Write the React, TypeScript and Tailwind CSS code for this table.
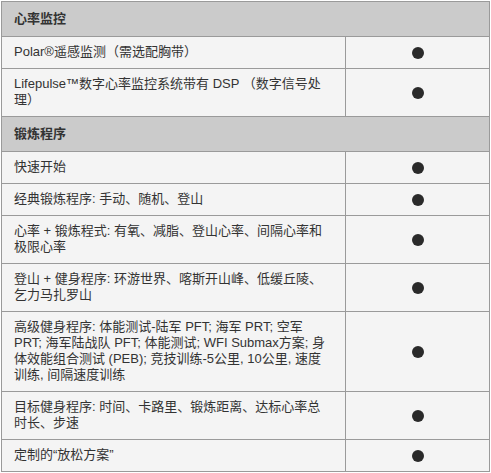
import React from "react";

type Row =
  | { kind: "header"; title: string }
  | { kind: "item"; lines: string[] };

const rows: Row[] = [
  { kind: "header", title: "心率监控" },
  { kind: "item", lines: ["Polar®遥感监测（需选配胸带）"] },
  { kind: "item", lines: ["Lifepulse™数字心率监控系统带有 DSP （数字信号处", "理）"] },
  { kind: "header", title: "锻炼程序" },
  { kind: "item", lines: ["快速开始"] },
  { kind: "item", lines: ["经典锻炼程序: 手动、随机、登山"] },
  { kind: "item", lines: ["心率 + 锻炼程式: 有氧、减脂、登山心率、间隔心率和", "极限心率"] },
  { kind: "item", lines: ["登山 + 健身程序: 环游世界、喀斯开山峰、低缓丘陵、", "乞力马扎罗山"] },
  {
    kind: "item",
    lines: [
      "高级健身程序: 体能测试-陆军 PFT; 海军 PRT; 空军",
      "PRT; 海军陆战队 PFT; 体能测试; WFI Submax方案; 身",
      "体效能组合测试 (PEB); 竞技训练-5公里, 10公里, 速度",
      "训练, 间隔速度训练",
    ],
  },
  { kind: "item", lines: ["目标健身程序: 时间、卡路里、锻炼距离、达标心率总", "时长、步速"] },
  { kind: "item", lines: ["定制的“放松方案”"] },
];

export default function App() {
  return (
    <div className="bg-white p-px w-[491px] h-[473px]">
      <table
        className="border-collapse w-[489px] text-[13px] leading-4 text-[#333]"
        style={{ fontFamily: '"Liberation Sans", "Noto Sans CJK SC", sans-serif' }}
      >
        <colgroup>
          <col className="w-[344px]" />
          <col className="w-[144px]" />
        </colgroup>
        <tbody>
          {rows.map((r, i) =>
            r.kind === "header" ? (
              <tr key={i}>
                <td
                  colSpan={2}
                  className="border border-[#9a9a9a] bg-[#cbcbcb] pl-3 pt-[9px] pb-[9px] font-bold"
                >
                  {r.title}
                </td>
              </tr>
            ) : (
              <tr key={i}>
                <td className="border border-[#9a9a9a] bg-[#f4f4f4] pl-3 pt-[7px] pb-[8px] whitespace-nowrap">
                  {r.lines.map((l, j) => (
                    <div key={j}>{l}</div>
                  ))}
                </td>
                <td className="border border-[#9a9a9a] bg-[#f4f4f4] align-middle">
                  <div className="mx-auto w-3 h-3 rounded-full bg-[#2a2a2a]" />
                </td>
              </tr>
            )
          )}
        </tbody>
      </table>
    </div>
  );
}
